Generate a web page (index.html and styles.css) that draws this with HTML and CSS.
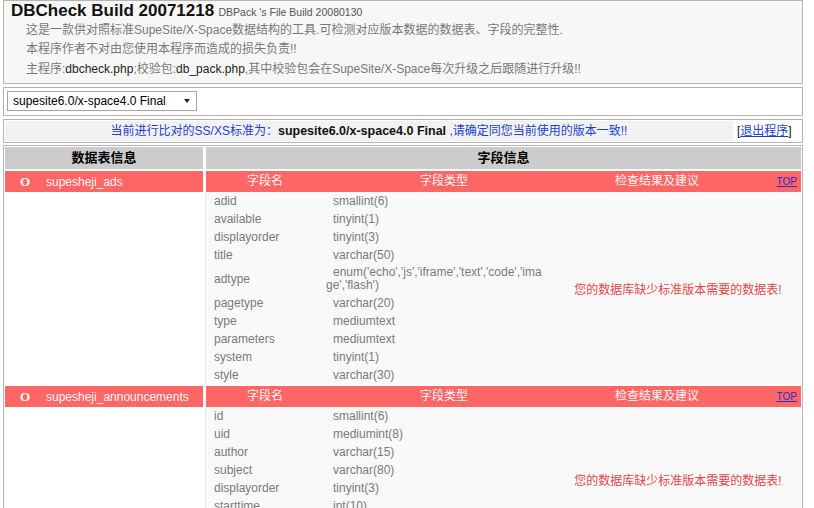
FILE: index.html
```html
<!DOCTYPE html>
<html lang="zh-CN">
<head>
<meta charset="utf-8">
<title>DBCheck Build 20071218</title>
<link rel="stylesheet" href="styles.css">
</head>
<body>
<div class="page">
  <div class="intro">
    <div class="title"><b>DBCheck Build 20071218</b> <span class="sub">DBPack 's File Build 20080130</span></div>
    <p class="line">这是一款供对照标准SupeSite/X-Space数据结构的工具.可检测对应版本数据的数据表、字段的完整性.</p>
    <p class="line">本程序作者不对由您使用本程序而造成的损失负责!!</p>
    <p class="line">主程序:<span class="file">dbcheck.php</span>;校验包:<span class="file">db_pack.php</span>,其中校验包会在SupeSite/X-Space每次升级之后跟随进行升级!!</p>
  </div>

  <div class="picker">
    <div class="select-wrap">
      <select class="select"><option>supesite6.0/x-space4.0 Final</option></select>
      <span class="arrow"></span>
    </div>
  </div>

  <div class="notice">
    <div class="notice-main">当前进行比对的SS/XS标准为：<b class="std">supesite6.0/x-space4.0 Final</b> ,请确定同您当前使用的版本一致!!</div>
    <div class="notice-exit">[<a href="#">退出程序</a>]</div>
  </div>

  <div class="grid">
    <div class="hcell">数据表信息</div>
    <div class="hcell">字段信息</div>

    <div class="tname"><span class="o">O</span>supesheji_ads</div>
    <div class="fhead"><span>字段名</span><span>字段类型</span><span>检查结果及建议</span><a href="#" class="top">TOP</a></div>
    <div class="tblank"></div>
    <div class="fields">
      <div class="flist">
        <div class="frow"><span class="fn">adid</span><span class="ft">smallint(6)</span></div>
        <div class="frow"><span class="fn">available</span><span class="ft">tinyint(1)</span></div>
        <div class="frow"><span class="fn">displayorder</span><span class="ft">tinyint(3)</span></div>
        <div class="frow"><span class="fn">title</span><span class="ft">varchar(50)</span></div>
        <div class="frow"><span class="fn">adtype</span><span class="ft">enum('echo','js','iframe','text','code','image','flash')</span></div>
        <div class="frow"><span class="fn">pagetype</span><span class="ft">varchar(20)</span></div>
        <div class="frow"><span class="fn">type</span><span class="ft">mediumtext</span></div>
        <div class="frow"><span class="fn">parameters</span><span class="ft">mediumtext</span></div>
        <div class="frow"><span class="fn">system</span><span class="ft">tinyint(1)</span></div>
        <div class="frow"><span class="fn">style</span><span class="ft">varchar(30)</span></div>
      </div>
      <div class="msg">您的数据库缺少标准版本需要的数据表!</div>
    </div>

    <div class="tname"><span class="o">O</span>supesheji_announcements</div>
    <div class="fhead"><span>字段名</span><span>字段类型</span><span>检查结果及建议</span><a href="#" class="top">TOP</a></div>
    <div class="tblank"></div>
    <div class="fields">
      <div class="flist">
        <div class="frow"><span class="fn">id</span><span class="ft">smallint(6)</span></div>
        <div class="frow"><span class="fn">uid</span><span class="ft">mediumint(8)</span></div>
        <div class="frow"><span class="fn">author</span><span class="ft">varchar(15)</span></div>
        <div class="frow"><span class="fn">subject</span><span class="ft">varchar(80)</span></div>
        <div class="frow"><span class="fn">displayorder</span><span class="ft">tinyint(3)</span></div>
        <div class="frow"><span class="fn">starttime</span><span class="ft">int(10)</span></div>
        <div class="frow"><span class="fn">endtime</span><span class="ft">int(10)</span></div>
        <div class="frow"><span class="fn">message</span><span class="ft">text</span></div>
      </div>
      <div class="msg">您的数据库缺少标准版本需要的数据表!</div>
    </div>
  </div>
</div>
</body>
</html>
```

FILE: styles.css
```css
html, body {
  margin: 0;
  padding: 0;
  background: #fff;
}
body {
  font-family: "Liberation Sans", "Noto Sans CJK SC", sans-serif;
  font-size: 12px;
  color: #333;
}
.page {
  width: 800px;
  margin-left: 3px;
  display: flex;
  flex-direction: column;
  gap: 3px;
}

/* intro box */
.intro {
  border: 1px solid #b4b4b4;
  background: #f7f7f7;
  box-sizing: border-box;
  height: 84px;
}
.title {
  height: 20px;
  line-height: 20px;
  padding-left: 7px;
  white-space: nowrap;
}
.title b {
  font-size: 17px;
  color: #111;
}
.sub {
  font-size: 10.5px;
  color: #555;
  margin-left: 1px;
}
.line {
  margin: 0;
  padding-left: 22px;
  line-height: 19px;
  color: #777;
  white-space: nowrap;
}
.line:last-child {
  margin-top: 1px;
}
.file {
  color: #222;
}

/* picker */
.picker {
  border: 1px solid #b4b4b4;
  background: #fff;
  height: 29px;
  box-sizing: border-box;
  padding: 3px 0 0 3px;
}
.select-wrap {
  position: relative;
  width: 190px;
  height: 20px;
}
.select {
  appearance: none;
  -webkit-appearance: none;
  width: 190px;
  height: 20px;
  margin: 0;
  border: 1px solid #a5a5a5;
  border-radius: 0;
  background: #fff;
  font-family: "Liberation Sans", sans-serif;
  font-size: 12px;
  color: #000;
  padding: 0 0 0 5px;
  box-sizing: border-box;
}
.arrow {
  position: absolute;
  right: 7px;
  top: 8px;
  width: 0;
  height: 0;
  border-left: 3.5px solid transparent;
  border-right: 3.5px solid transparent;
  border-top: 4px solid #222;
  pointer-events: none;
}

/* notice */
.notice {
  border: 1px solid #b4b4b4;
  height: 24px;
  box-sizing: border-box;
  display: flex;
  padding: 1px;
}
.notice-main {
  flex: 1;
  background: #f2f2f2;
  text-align: center;
  line-height: 20px;
  color: #1b3fd0;
  white-space: nowrap;
}
.std {
  color: #111;
  font-size: 12.5px;
}
.notice-exit {
  width: 64px;
  background: #fff;
  line-height: 20px;
  color: #111;
  padding-left: 4px;
  white-space: nowrap;
}
.notice-exit a {
  color: #1b3fd0;
}

/* main grid */
.grid {
  border: 1px solid #b4b4b4;
  padding: 1px;
  margin-top: -1px;
  display: grid;
  grid-template-columns: 198px 1fr;
  gap: 2px 3px;
}
.hcell {
  background: #cccccc;
  height: 22px;
  line-height: 22px;
  text-align: center;
  font-weight: bold;
  font-size: 13px;
  color: #000;
}
.tname {
  background: #ff6666;
  height: 21px;
  line-height: 21px;
  color: #fff4f4;
  padding-left: 15px;
  white-space: nowrap;
}
.o {
  display: inline-block;
  width: 26px;
  font-family: "Liberation Serif", serif;
  font-size: 13px;
  font-weight: bold;
}
.fhead {
  background: #ff6666;
  height: 21px;
  line-height: 21px;
  color: #fff4f4;
  display: grid;
  grid-template-columns: 118px 240px 186px 1fr;
  text-align: center;
}
.top {
  font-size: 10px;
  color: #2a2ad0;
  text-align: right;
  padding-right: 4px;
}
.tblank {
  background: #fff;
  margin-top: -2px;
}
.fields {
  background: #f9f9f9;
  border-left: 1px solid #e6e6e6;
  margin-left: -1px;
  margin-top: -2px;
  display: flex;
  color: #7a7a7a;
}
.flist {
  width: 362px;
  flex: none;
}
.frow {
  display: grid;
  grid-template-columns: 120px 240px;
  align-items: center;
  min-height: 18px;
  padding: 2px 0;
  box-sizing: border-box;
  line-height: 13px;
}
.fn {
  padding-left: 8px;
}
.ft {
  text-indent: 7px;
  padding-right: 20px;
  word-break: break-all;
}
.msg {
  flex: 1;
  align-self: center;
  text-align: center;
  color: #e04848;
  padding-right: 13px;
  white-space: nowrap;
}
```
